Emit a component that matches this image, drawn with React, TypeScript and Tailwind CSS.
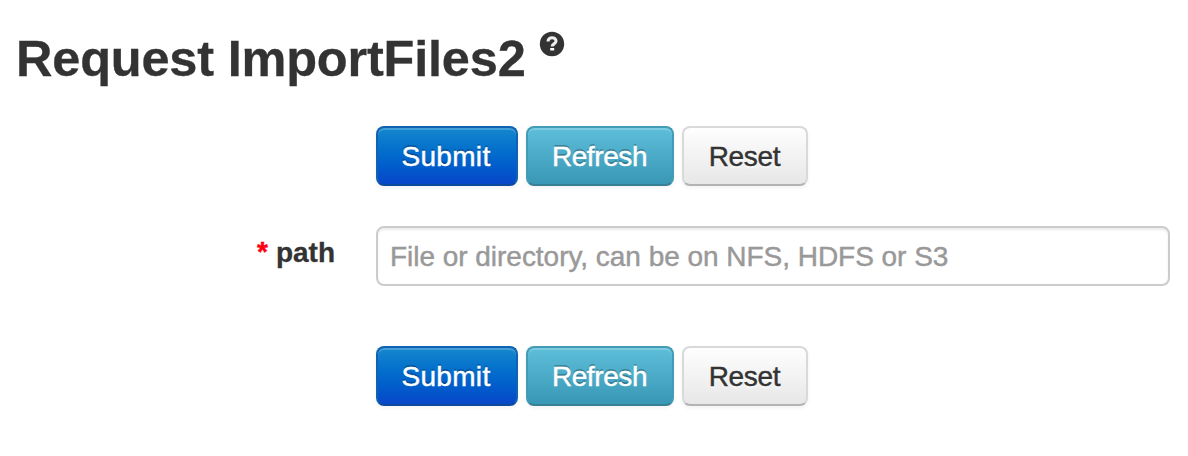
import React from 'react';

const base =
  'h-[60px] shrink-0 rounded-lg border-2 bg-origin-border pt-[1px] text-[28px] leading-[40px] flex items-center justify-center shadow-[inset_0_2px_0_rgba(255,255,255,0.2),0_2px_4px_rgba(0,0,0,0.05)] [-webkit-text-stroke:0.45px_currentColor]';

function Buttons() {
  return (
    <div className="ml-[376px] flex gap-[8px]">
      <button type="button" className={`${base} w-[142px] border-[#1163b1] border-b-[#0d4a9b] bg-linear-to-b from-[#1789cd] to-[#0a43c9] pr-[2px] tracking-[0.3px] text-white [text-shadow:0_-2px_0_rgba(0,0,0,0.25)]`}>
        Submit
      </button>
      <button type="button" className={`${base} w-[148px] border-[#439cb5] border-b-[#367f95] bg-linear-to-b from-[#5fc0dc] to-[#3796b3] pr-[1px] tracking-[-0.4px] text-white [text-shadow:0_-2px_0_rgba(0,0,0,0.25)]`}>
        Refresh
      </button>
      <button type="button" className={`${base} w-[126px] border-[#d9d9d9] border-b-[#b3b3b3] bg-linear-to-b from-white to-[#e6e6e6] pr-[1px] tracking-[-0.3px] text-[#333] [text-shadow:0_2px_2px_rgba(255,255,255,0.75)]`}>
        Reset
      </button>
    </div>
  );
}

export default function App() {
  return (
    <main className="h-[456px] w-[1188px] overflow-hidden bg-white font-['Liberation_Sans',Arial,sans-serif] text-[#333]">
      <header className="flex h-[126px] items-start pl-[16px] pt-[18px]">
        <h1 className="w-[510px] whitespace-nowrap pt-[1px] text-[50.5px] font-bold leading-[80px] tracking-[-0.2px] [-webkit-text-stroke:0.3px_currentColor]">Request ImportFiles2</h1>
        <svg className="ml-[13px] mt-[13px] h-[26px] w-[26px] blur-[0.4px]" viewBox="0 0 26 26">
          <circle cx="13" cy="13" r="12.200" fill="#333" />
          <path d="M9 10.400C9 5.600 17 5.600 17 10.100c0 3-3.800 2.600-3.800 5.500" fill="none" stroke="#eee" strokeWidth="3.100" />
          <path d="M11.200 17h4v2.500h-4z" fill="#fff" />
        </svg>
      </header>
      <Buttons />
      <div className="mt-[40px] flex h-[60px]">
        <label htmlFor="path" className="flex w-[335px] justify-end gap-[8px] pt-[7px] text-[28px] font-bold leading-[40px]">
          <span className="-mt-[1px] text-[#ff0012] [-webkit-text-stroke:0.4px_currentColor]">*</span>
          <span className="[-webkit-text-stroke:0.3px_currentColor]">path</span>
        </label>
        <input id="path" placeholder="File or directory, can be on NFS, HDFS or S3" className="ml-[41px] h-[60px] w-[794px] rounded-lg border-2 border-[#ccc] bg-white px-[12px] pt-[2px] text-[28px] leading-[40px] tracking-[-0.03px] shadow-[inset_0_2px_2px_rgba(0,0,0,0.075)] [-webkit-text-stroke:0.45px_#999] placeholder:text-[#999]" />
      </div>
      <div className="mt-[60px]"><Buttons /></div>
    </main>
  );
}
